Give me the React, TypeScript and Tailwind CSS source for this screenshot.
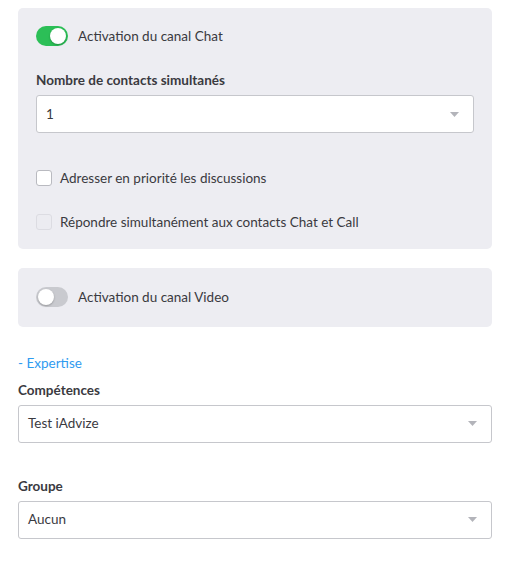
import { useState } from 'react'

/* ── Toggle ──────────────────────────────────────────────────────────────── */
function Toggle({ on, onChange }: { on: boolean; onChange: (v: boolean) => void }) {
  return (
    <button
      type="button"
      onClick={() => onChange(!on)}
      className={
        'relative flex w-[32px] h-[20px] flex-shrink-0 items-center rounded-full p-[2px] ' +
        (on ? 'bg-[#2cbf57] justify-end' : 'bg-[#c9cacf] justify-start')
      }
    >
      <span className="block w-[16px] h-[16px] rounded-full bg-white shadow-[0_1px_2px_rgba(0,0,0,0.25)]" />
    </button>
  )
}

/* ── Checkbox ────────────────────────────────────────────────────────────── */
function Check({ label, disabled }: { label: string; disabled?: boolean }) {
  return (
    <label className="flex items-center gap-[8px] h-[16px]">
      <span
        className={
          'block w-[16px] h-[16px] rounded-[3px] border ' +
          (disabled ? 'border-[#dcdce2] bg-[#ececf1]' : 'border-[#b9bac0] bg-white')
        }
      />
      <span className="text-[13.5px] leading-[16px] text-[#3a3a3f]">{label}</span>
    </label>
  )
}

/* ── Select ──────────────────────────────────────────────────────────────── */
function Select({ value }: { value: string }) {
  return (
    <div className="flex items-center justify-between h-[38px] rounded-[3px] border border-[#c6c7cc] bg-white pl-[9px] pr-[14px]">
      <span className="text-[13.5px] text-[#3a3a3f]">{value}</span>
      <svg width="9" height="5" viewBox="0 0 9 5">
        <path d="M0 0h9L4.5 5z" fill="#b3b4ba" />
      </svg>
    </div>
  )
}

export default function App() {
  const [chat, setChat] = useState(true)
  const [video, setVideo] = useState(false)

  return (
    <div className="min-h-screen bg-white px-[18px] pt-[8px] pb-[20px] text-[#3a3a3f]"
      style={{ fontFamily: 'Lato, "Open Sans", sans-serif' }}>

      {/* ── Chat ─────────────────────────────────────────────────── */}
      <div className="rounded-[5px] bg-[#ededf2] px-[18px] pt-[18px] pb-[19px]">
        <div className="flex items-center gap-[10px]">
          <Toggle on={chat} onChange={setChat} />
          <span className="text-[13.5px]">Activation du canal Chat</span>
        </div>
        <p className="mt-[26px] text-[13.5px] leading-[16px] font-bold">Nombre de contacts simultanés</p>
        <div className="mt-[7px]">
          <Select value="1" />
        </div>
        <div className="mt-[37px] flex flex-col gap-[28px]">
          <Check label="Adresser en priorité les discussions" />
          <Check label="Répondre simultanément aux contacts Chat et Call" disabled />
        </div>
      </div>

      {/* ── Video ────────────────────────────────────────────────── */}
      <div className="mt-[19px] rounded-[5px] bg-[#ededf2] px-[18px] py-[19px]">
        <div className="flex items-center gap-[10px]">
          <Toggle on={video} onChange={setVideo} />
          <span className="text-[13.5px]">Activation du canal Video</span>
        </div>
      </div>

      {/* ── Expertise ────────────────────────────────────────────── */}
      <p className="mt-[28px] text-[13.5px] leading-[16px] text-[#2f9bf0]">- Expertise</p>
      <p className="mt-[11px] text-[13.5px] leading-[16px] font-bold">Compétences</p>
      <div className="mt-[7px]">
        <Select value="Test iAdvize" />
      </div>
      <p className="mt-[35px] text-[13.5px] leading-[16px] font-bold">Groupe</p>
      <div className="mt-[7px]">
        <Select value="Aucun" />
      </div>
    </div>
  )
}
